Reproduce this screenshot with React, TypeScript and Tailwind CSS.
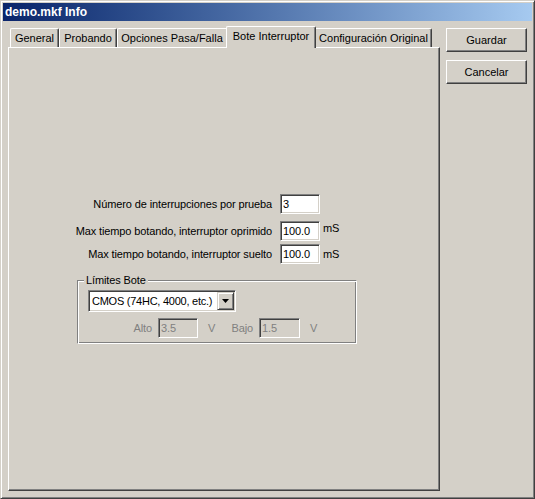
import { useState } from 'react';

const raised =
  'border border-t-white border-l-white border-r-[#404040] border-b-[#404040] shadow-[inset_-1px_-1px_0_#808080]';
const sunken =
  'border border-t-[#808080] border-l-[#808080] border-r-white border-b-white shadow-[inset_1px_1px_0_#404040,inset_-1px_-1px_0_#d4d0c8]';

type TabDef = { label: string; cls: string };

const tabs: TabDef[] = [
  {
    label: 'General',
    cls: 'w-[49px] h-[19px] border-t border-l border-r border-t-white border-l-white border-r-[#404040] shadow-[inset_-1px_0_0_#808080] rounded-tl-[2px] rounded-tr-[2px]',
  },
  {
    label: 'Probando',
    cls: 'w-[58px] h-[19px] border-t border-l border-r border-t-white border-l-white border-r-[#404040] shadow-[inset_-1px_0_0_#808080] rounded-tl-[2px] rounded-tr-[2px]',
  },
  {
    label: 'Opciones Pasa/Falla',
    cls: 'w-[109px] h-[19px] border-t border-l border-t-white border-l-white rounded-tl-[2px]',
  },
  {
    label: 'Bote Interruptor',
    cls: 'relative z-10 -mb-px w-[90px] h-[22px] pb-[3px] bg-[#d4d0c8] border-t border-l border-r border-t-white border-l-white border-r-[#404040] shadow-[inset_-1px_0_0_#808080] rounded-tl-[2px] rounded-tr-[2px]',
  },
  {
    label: 'Configuración Original',
    cls: 'w-[116px] h-[19px] border-t border-r border-t-white border-r-[#404040] shadow-[inset_-1px_0_0_#808080] rounded-tr-[2px]',
  },
];

function Field({ value, disabled, width }: { value: string; disabled?: boolean; width: string }) {
  return (
    <input
      readOnly
      defaultValue={value}
      className={`${sunken} ${width} h-[20px] pl-[2px] outline-none text-[11px] ${
        disabled ? 'bg-[#d4d0c8] text-[#808080]' : 'bg-white text-black'
      }`}
    />
  );
}

export default function App() {
  const [family] = useState('CMOS (74HC, 4000, etc.)');

  return (
    <div className="w-[535px] h-[499px] bg-[#d4d0c8] p-[2px] border border-t-[#d4d0c8] border-l-[#d4d0c8] border-r-[#404040] border-b-[#404040] shadow-[inset_1px_1px_0_#fff,inset_-1px_-1px_0_#808080] font-['Liberation_Sans',Arial,sans-serif] text-[11px] text-black flex flex-col">
      {/* Title bar */}
      <div className="h-[18px] flex items-center pl-[2px] bg-gradient-to-r from-[#0a246a] to-[#a6caf0] text-white font-bold text-[12px]">
        demo.mkf Info
      </div>

      <div className="flex pl-[5px] pt-[5px] gap-[6px]">
        {/* Tabs + page */}
        <div className="w-[432px] flex flex-col">
          <div className="h-[21px] flex items-end pl-[2px]">
            {tabs.map((t) => (
              <div key={t.label} className={`${t.cls} flex items-center justify-center whitespace-nowrap`}>
                {t.label}
              </div>
            ))}
          </div>

          <div className={`${raised} h-[444px] pt-[146px] flex flex-col tracking-[-0.12px]`}>
            <div className="flex items-center h-[20px]">
              <span className="w-[263px] text-right">Número de interrupciones por prueba</span>
              <span className="ml-[8px]">
                <Field value="3" width="w-[40px]" />
              </span>
            </div>
            <div className="flex items-center h-[20px] mt-[7px]">
              <span className="w-[263px] text-right">Max tiempo botando, interruptor oprimido</span>
              <span className="ml-[8px]">
                <Field value="100.0" width="w-[40px]" />
              </span>
              <span className="ml-[3px] -mt-[6px]">mS</span>
            </div>
            <div className="flex items-center h-[20px] mt-[3px]">
              <span className="w-[263px] text-right">Max tiempo botando, interruptor suelto</span>
              <span className="ml-[8px]">
                <Field value="100.0" width="w-[40px]" />
              </span>
              <span className="ml-[3px]">mS</span>
            </div>

            {/* Límites Bote group */}
            <div className="relative mt-[16px] ml-[68px] w-[280px] h-[64px] pl-[10px] pt-[9px] border border-t-[#808080] border-l-[#808080] border-r-white border-b-white shadow-[inset_1px_1px_0_#fff,inset_-1px_-1px_0_#808080]">
              <span className="absolute -top-[8px] left-[6px] px-[2px] bg-[#d4d0c8] leading-[14px]">
                Límites Bote
              </span>

              <div className={`${sunken} w-[148px] h-[22px] p-[1px] flex bg-white`}>
                <div className="flex-1 flex items-center pl-[2px] whitespace-nowrap tracking-[-0.25px]">{family}</div>
                <div className="w-[17px] flex items-center justify-center bg-[#d4d0c8] border border-t-[#d4d0c8] border-l-[#d4d0c8] border-r-[#404040] border-b-[#404040] shadow-[inset_1px_1px_0_#fff,inset_-1px_-1px_0_#808080]">
                  <svg width="7" height="4" viewBox="0 0 7 4">
                    <polygon points="0,0 7,0 3.5,4" fill="#000" />
                  </svg>
                </div>
              </div>

              <div className="flex items-center h-[20px] mt-[6px] text-[#808080]">
                <span className="w-[64px] text-right">Alto</span>
                <span className="ml-[6px]">
                  <Field value="3.5" disabled width="w-[40px]" />
                </span>
                <span className="ml-[10px] w-[10px]">V</span>
                <span className="w-[35px] text-right">Bajo</span>
                <span className="ml-[6px]">
                  <Field value="1.5" disabled width="w-[41px]" />
                </span>
                <span className="ml-[10px]">V</span>
              </div>
            </div>
          </div>
        </div>

        {/* Buttons */}
        <div className="flex flex-col gap-[8px] mt-[2px]">
          <button className={`${raised} w-[81px] h-[24px] bg-[#d4d0c8]`}>Guardar</button>
          <button className={`${raised} w-[81px] h-[24px] bg-[#d4d0c8]`}>Cancelar</button>
        </div>
      </div>
    </div>
  );
}
